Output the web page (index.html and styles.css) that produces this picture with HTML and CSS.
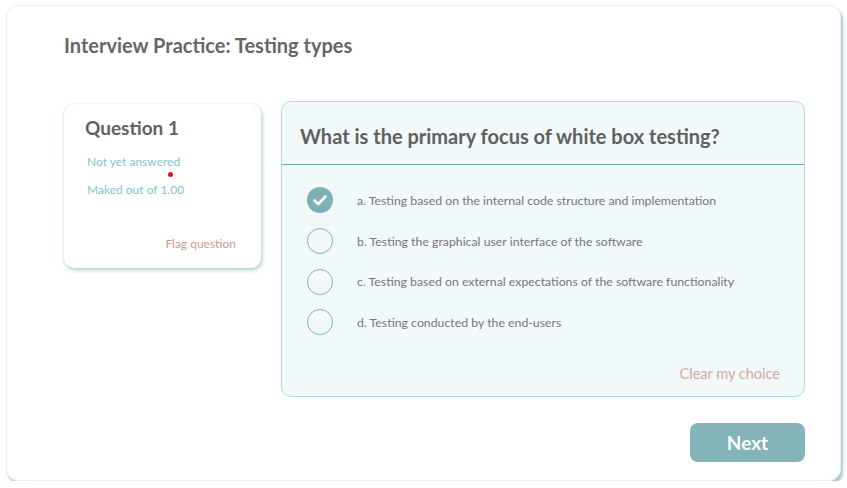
FILE: index.html
```html
<!DOCTYPE html>
<html>
<head>
<meta charset="utf-8">
<link rel="stylesheet" href="styles.css">
</head>
<body>
<div class="card">
  <h1 class="title">Interview Practice: Testing types</h1>
  <div class="content">
    <div class="info">
      <h2 class="qnum">Question 1</h2>
      <div class="status">Not yet answered</div>
      <div class="dot-row"><span class="dot"></span></div>
      <div class="status">Maked out of 1.00</div>
      <div class="flag">Flag question</div>
    </div>
    <div class="right">
      <div class="panel">
        <div class="qhead">What is the primary focus of white box testing?</div>
        <ul class="options">
          <li class="opt">
            <span class="radio checked">
              <svg width="26" height="26" viewBox="0 0 26 26"><circle cx="13" cy="13" r="13" fill="#7db1b6"/><path d="M7.5 13.5 L11.3 17 L18.5 9.5" fill="none" stroke="#fff" stroke-width="2.6" stroke-linecap="round" stroke-linejoin="round"/></svg>
            </span>
            <span class="otext">a. Testing based on the internal code structure and implementation</span>
          </li>
          <li class="opt">
            <span class="radio"></span>
            <span class="otext">b. Testing the graphical user interface of the software</span>
          </li>
          <li class="opt">
            <span class="radio"></span>
            <span class="otext">c. Testing based on external expectations of the software functionality</span>
          </li>
          <li class="opt">
            <span class="radio"></span>
            <span class="otext">d. Testing conducted by the end-users</span>
          </li>
        </ul>
        <div class="clear">Clear my choice</div>
      </div>
      <div class="actions">
        <button class="next">Next</button>
      </div>
    </div>
  </div>
</div>
</body>
</html>
```

FILE: styles.css
```css
* { box-sizing: border-box; }
html, body { margin: 0; padding: 0; background: #fff; }
body { font-family: "Lato", "Open Sans", sans-serif; color: #5f5f5f; }

.card {
  margin: 5px 0 0 6px;
  width: 835px;
  height: 476px;
  border: 1px solid #e7f0f1;
  border-radius: 12px;
  background: #fff;
  box-shadow: 2px 3px 3px rgba(110, 165, 170, 0.6);
  padding: 27px 0 0 57px;
}

.title {
  margin: 0;
  font-size: 20px;
  line-height: 24px;
  font-weight: 700;
  color: #666;
}

.content {
  display: flex;
  align-items: flex-start;
  gap: 20px;
  margin-top: 44px;
}

.info {
  margin-top: 3px;
  width: 197px;
  height: 164px;
  background: #fff;
  border-radius: 10px;
  box-shadow: 1px 2px 4px rgba(100, 160, 165, 0.55), 0 0 2px rgba(0,0,0,0.06);
  padding: 13px 25px 0 21px;
  display: flex;
  flex-direction: column;
}

.qnum {
  margin: 0;
  font-size: 19px;
  line-height: 22px;
  font-weight: 700;
  color: #626262;
}

.status {
  font-size: 12px;
  line-height: 14px;
  color: #86c3cb;
  padding-left: 2px;
}
.info .status:first-of-type { margin-top: 16px; }

.dot-row { height: 14px; position: relative; }
.dot {
  position: absolute;
  left: 83px;
  top: 3px;
  width: 5px;
  height: 5px;
  border-radius: 50%;
  background: #e8101a;
}

.flag {
  margin-top: 40px;
  text-align: right;
  font-size: 12px;
  line-height: 14px;
  color: #d09a8e;
}

.right { display: flex; flex-direction: column; }

.panel {
  width: 524px;
  height: 296px;
  background: #f1f9fb;
  border: 1px solid #addbe1;
  border-radius: 10px;
  display: flex;
  flex-direction: column;
}

.qhead {
  height: 63px;
  border-bottom: 1px solid #6aa9a8;
  padding: 22px 0 0 18px;
  font-size: 20px;
  line-height: 24px;
  font-weight: 700;
  color: #606060;
}

.options {
  list-style: none;
  margin: 0;
  padding: 15px 0 0 25px;
}

.opt {
  display: flex;
  align-items: center;
  height: 40.7px;
}

.radio {
  width: 26px;
  height: 26px;
  border-radius: 50%;
  border: 1.5px solid #7cb8bb;
  flex: none;
  display: block;
}
.radio.checked { border: none; }
.radio svg { display: block; }

.otext {
  margin-left: 24px;
  font-size: 12.3px;
  color: #777;
}

.clear {
  margin-top: auto;
  padding: 0 24px 14px 0;
  text-align: right;
  font-size: 14.5px;
  line-height: 16px;
  color: #d5aa9e;
}

.actions {
  display: flex;
  justify-content: flex-end;
  margin-top: 26px;
}

.next {
  width: 115px;
  height: 39px;
  border: none;
  border-radius: 8px;
  background: #82b4b8;
  color: #fff;
  font-family: inherit;
  font-size: 19px;
  font-weight: 700;
  padding: 0;
}
```
